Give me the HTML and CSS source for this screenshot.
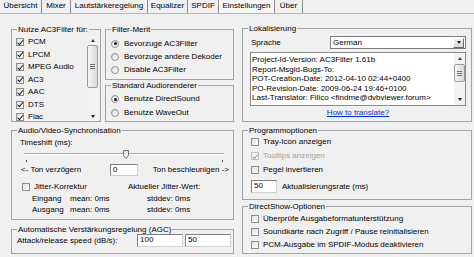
FILE: index.html
```html
<!DOCTYPE html>
<html lang="de">

<head>
    <meta charset="UTF-8">
    <meta name="viewport" content="width=device-width, initial-scale=1.0">
    <title>AC3Filter Einstellungen</title>
    <link rel="stylesheet" href="styles.css">
</head>

<body>
    <div class="tabs">
        <div class="tab tab-overview">Übersicht</div>
        <div class="tab tab-mixer">Mixer</div>
        <div class="tab tab-volume">Lautstärkeregelung</div>
        <div class="tab tab-eq">Equalizer</div>
        <div class="tab tab-spdif">SPDIF</div>
        <div class="tab tab-settings active">Einstellungen</div>
        <div class="tab tab-about">Über</div>
    </div>

    <div class="page">
        <div class="col col-left">
            <div class="top-row">
                <fieldset class="group g-formats">
                    <legend>Nutze AC3Filter für:</legend>
                    <div class="checklist">
                        <div class="items">
                            <div class="item"><span class="cb on"></span>PCM</div>
                            <div class="item"><span class="cb on"></span>LPCM</div>
                            <div class="item"><span class="cb on"></span>MPEG Audio</div>
                            <div class="item"><span class="cb on"></span>AC3</div>
                            <div class="item"><span class="cb on"></span>AAC</div>
                            <div class="item"><span class="cb on"></span>DTS</div>
                            <div class="item"><span class="cb on"></span>Flac</div>
                        </div>
                        <div class="vscroll list-scroll">
                            <div class="sb-btn"><span class="arr up"></span></div>
                            <div class="sb-track"><div class="thumb"><span class="grip"></span></div></div>
                            <div class="sb-btn"><span class="arr down"></span></div>
                        </div>
                    </div>
                </fieldset>

                <div class="stack">
                    <fieldset class="group g-merit">
                        <legend>Filter-Merit</legend>
                        <div class="body">
                            <div class="opt"><span class="rb on"></span>Bevorzuge AC3Filter</div>
                            <div class="opt"><span class="rb"></span>Bevorzuge andere Dekoder</div>
                            <div class="opt"><span class="rb"></span>Disable AC3Filter</div>
                        </div>
                    </fieldset>
                    <fieldset class="group g-renderer">
                        <legend>Standard Audiorenderer</legend>
                        <div class="body">
                            <div class="opt"><span class="rb on"></span>Benutze DirectSound</div>
                            <div class="opt"><span class="rb"></span>Benutze WaveOut</div>
                        </div>
                    </fieldset>
                </div>
            </div>

            <fieldset class="group g-sync">
                <legend>Audio/Video-Synchronisation</legend>
                <div class="body">
                    <div class="ts-label">Timeshift (ms):</div>
                    <div class="slider">
                        <div class="track"></div>
                        <div class="ticks"><span class="tick"></span><span class="tick"></span></div>
                        <svg class="slider-thumb" width="6" height="9" viewBox="0 0 6 9">
                            <path d="M0.5 0.5 H5.5 V5.5 L3 8.5 L0.5 5.5 Z" fill="#ececec" stroke="#707070" stroke-width="1"/>
                        </svg>
                    </div>
                    <div class="ton-row">
                        <span class="ton-left">&lt;- Ton verzögern</span>
                        <span class="field">0</span>
                        <span class="ton-right">Ton beschleunigen -&gt;</span>
                    </div>
                    <div class="jitter-row">
                        <div class="chk"><span class="cb"></span>Jitter-Korrektur</div>
                        <div>Aktueller Jitter-Wert:</div>
                    </div>
                    <div class="stat-row"><span>Eingang</span><span>mean: 0ms</span><span>stddev: 0ms</span></div>
                    <div class="stat-row"><span>Ausgang</span><span>mean: 0ms</span><span>stddev: 0ms</span></div>
                </div>
            </fieldset>

            <fieldset class="group g-agc">
                <legend>Automatische Verstärkungsregelung (AGC)</legend>
                <div class="body agc-row">
                    <span>Attack/release speed (dB/s):</span>
                    <span class="field">100</span>
                    <span class="field">50</span>
                </div>
            </fieldset>
        </div>

        <div class="col col-right">
            <fieldset class="group g-locale">
                <legend>Lokalisierung</legend>
                <div class="body">
                    <div class="lang-row">
                        <span class="lang-label">Sprache</span>
                        <div class="combo">
                            <span class="combo-text">German</span>
                            <span class="combo-btn"><span class="arr down"></span></span>
                        </div>
                    </div>
                    <div class="memo">
                        <div class="memo-text">
                            <div>Project-Id-Version: AC3Filter 1.61b</div>
                            <div>Report-Msgid-Bugs-To: </div>
                            <div>POT-Creation-Date: 2012-04-10 02:44+0400</div>
                            <div>PO-Revision-Date: 2009-06-24 19:46+0100</div>
                            <div>Last-Translator: Filico &lt;findme@dvbviewer.forum&gt;</div>
                        </div>
                        <div class="vscroll memo-scroll">
                            <div class="sb-btn"><span class="arr up"></span></div>
                            <div class="sb-track"><div class="thumb"><span class="grip"></span></div></div>
                            <div class="sb-btn"><span class="arr down"></span></div>
                        </div>
                    </div>
                    <div class="link-row"><a href="#">How to translate?</a></div>
                </div>
            </fieldset>

            <fieldset class="group g-program">
                <legend>Programmoptionen</legend>
                <div class="body">
                    <div class="chk-row"><span class="cb"></span>Tray-Icon anzeigen</div>
                    <div class="chk-row disabled"><span class="cb on"></span>Tooltips anzeigen</div>
                    <div class="chk-row"><span class="cb"></span>Pegel invertieren</div>
                    <div class="rate-row"><span class="field">50</span>Aktualisierungsrate (ms)</div>
                </div>
            </fieldset>

            <fieldset class="group g-dshow">
                <legend>DirectShow-Optionen</legend>
                <div class="body">
                    <div class="chk-row"><span class="cb"></span>Überprüfe Ausgabeformatunterstützung</div>
                    <div class="chk-row"><span class="cb"></span>Soundkarte nach Zugriff / Pause reinitialisieren</div>
                    <div class="chk-row"><span class="cb"></span>PCM-Ausgabe im SPDIF-Modus deaktivieren</div>
                </div>
            </fieldset>
        </div>
    </div>
</body>

</html>
```

FILE: styles.css
```css
* {
    box-sizing: border-box;
}

body {
    margin: 0;
    width: 474px;
    height: 257px;
    overflow: hidden;
    background-color: #f0f0f0;
    color: #000;
    font: 8px/10px "Liberation Sans", Arial, sans-serif;
}

/* tab strip */
.tabs {
    display: flex;
    height: 14px;
    border-bottom: 1px solid #b9b9b9;
}

.tab {
    height: 13px;
    line-height: 12px;
    text-align: center;
    white-space: nowrap;
    border-right: 1px solid #8c8c8c;
}

.tab-overview { width: 42px; }
.tab-mixer { width: 29px; }
.tab-volume { width: 77px; }
.tab-eq { width: 40px; }
.tab-spdif { width: 31px; }
.tab-settings { width: 56px; }
.tab-about { width: 28px; }

.tab.active {
    background-color: #f7f7f7;
}

/* page layout */
.page {
    display: flex;
    gap: 8px;
    padding: 11px 0 0 11px;
}

.col {
    display: flex;
    flex-direction: column;
}

.col-left {
    width: 223px;
}

.col-right {
    width: 230px;
    margin-top: -1px;
}

.top-row {
    display: flex;
    gap: 4px;
}

.stack {
    width: 129px;
    display: flex;
    flex-direction: column;
}

/* group boxes */
.group {
    margin: 0;
    padding: 0;
    min-width: 0;
    border: 1px solid #a3a3a3;
}

.group legend {
    margin-left: 5px;
    padding: 0 1px;
    font-size: 8px;
    line-height: 9px;
}

.g-formats { width: 90px; }
.g-renderer { margin-top: 1px; }
.g-sync { margin-top: 4px; }
.g-agc { margin-top: 5px; }
.g-program { margin-top: 4px; }
.g-dshow { margin-top: 2px; }

.g-merit .body { padding: 3px 0 3px 5px; }
.g-renderer .body { padding: 2px 0 1px 5px; }
.g-sync .body { padding: 3px 4px 4px 8px; }
.g-locale .body { padding: 3px 5px 3px 7px; }
.g-program .body { padding: 0 0 6px 8px; }
.g-dshow .body { padding: 1px 0 2px 8px; }

/* check boxes and radios */
.cb {
    position: relative;
    flex: none;
    width: 8px;
    height: 8px;
    border: 1px solid #8e8f8f;
    background: linear-gradient(135deg, #dedede, #ffffff);
}

.cb.on::after {
    content: "";
    position: absolute;
    left: 1.5px;
    top: -0.5px;
    width: 2px;
    height: 4.5px;
    border: solid #151515;
    border-width: 0 1.5px 1.5px 0;
    transform: rotate(40deg);
}

.rb {
    position: relative;
    flex: none;
    width: 8px;
    height: 8px;
    border-radius: 50%;
    border: 1px solid #8e8f8f;
    background: linear-gradient(135deg, #dcdcdc, #ffffff);
}

.rb.on::after {
    content: "";
    position: absolute;
    left: 1.5px;
    top: 1.5px;
    width: 3px;
    height: 3px;
    border-radius: 50%;
    background-color: #151515;
}

.opt {
    display: flex;
    align-items: center;
    gap: 5px;
    height: 13px;
    white-space: nowrap;
}

.g-renderer .opt {
    height: 14px;
}

/* format list */
.checklist {
    display: flex;
    height: 85px;
    margin-top: 2px;
    padding-left: 4px;
    overflow: hidden;
}

.items {
    flex: 1;
}

.item {
    display: flex;
    align-items: center;
    gap: 4px;
    height: 12.5px;
    white-space: nowrap;
}

/* scroll bars */
.vscroll {
    flex: none;
    width: 11px;
    display: flex;
    flex-direction: column;
    background-color: #f3f3f3;
}

.list-scroll {
    margin-right: 2px;
}

.sb-btn {
    height: 9px;
    display: flex;
    align-items: center;
    justify-content: center;
}

.memo-scroll .sb-btn {
    height: 11px;
}

.sb-track {
    flex: 1;
}

.thumb {
    height: 43px;
    border: 1px solid #9b9b9b;
    border-radius: 2px;
    background: linear-gradient(90deg, #f4f4f4, #dadada);
    display: flex;
    align-items: center;
    justify-content: center;
}

.memo-scroll .thumb {
    height: 18px;
}

.grip {
    width: 5px;
    height: 5px;
    background: repeating-linear-gradient(#6f6f6f 0 1px, transparent 1px 2px);
}

.arr {
    width: 0;
    height: 0;
    border-left: 2.5px solid transparent;
    border-right: 2.5px solid transparent;
}

.arr.up {
    border-bottom: 3px solid #3a3a3a;
}

.arr.down {
    border-top: 3px solid #1a1a1a;
}

/* edit fields */
.field {
    display: block;
    height: 12px;
    padding-left: 2px;
    line-height: 10px;
    background-color: #fff;
    border: 1px solid;
    border-color: #7f7f7f #cfcfcf #cfcfcf #7f7f7f;
}

/* a/v sync */
.ts-label {
    height: 10px;
}

.slider {
    position: relative;
    width: 200px;
    height: 14px;
    margin-left: 4px;
    padding-top: 5px;
}

.track {
    height: 2px;
    background-color: #a6a6a6;
    border-bottom: 1px solid #fff;
}

.ticks {
    display: flex;
    justify-content: space-between;
    margin-top: 5px;
    padding: 0 1px 0 2px;
}

.tick {
    width: 1px;
    height: 2px;
    background-color: #555;
}

.slider-thumb {
    position: absolute;
    left: 99px;
    top: 2px;
}

.ton-row {
    display: grid;
    grid-template-columns: 90px 28px 1fr;
    align-items: center;
    height: 12px;
    margin-top: 2px;
    white-space: nowrap;
}

.ton-left {
    padding-left: 1px;
}

.ton-right {
    text-align: right;
}

.jitter-row {
    display: grid;
    grid-template-columns: 108px 1fr;
    align-items: center;
    height: 12px;
    margin-top: 5px;
    white-space: nowrap;
}

.chk {
    display: flex;
    align-items: center;
    gap: 4px;
    padding-left: 2px;
}

.stat-row {
    display: grid;
    grid-template-columns: 38px 77px 1fr;
    height: 11px;
    line-height: 11px;
    padding-left: 12px;
    white-space: nowrap;
}

/* agc */
.agc-row {
    display: grid;
    grid-template-columns: 118px 46px 46px;
    column-gap: 2px;
    align-items: center;
    height: 13px;
    padding-left: 5px;
    margin-bottom: 6px;
    white-space: nowrap;
}

.agc-row .field {
    height: 13px;
}

/* localisation */
.lang-row {
    display: grid;
    grid-template-columns: 80px 1fr;
    align-items: center;
    height: 13px;
}

.lang-label {
    padding-left: 1px;
}

.combo {
    display: flex;
    align-items: center;
    height: 13px;
    padding-left: 2px;
    background-color: #fff;
    border: 1px solid #7a7a7a;
}

.combo-text {
    flex: 1;
}

.combo-btn {
    width: 11px;
    height: 10px;
    margin-right: 1px;
    display: flex;
    align-items: center;
    justify-content: center;
    background: linear-gradient(#f2f2f2, #d9d9d9);
    border: 1px solid;
    border-color: #fff #6a6a6a #6a6a6a #fff;
}

.memo {
    display: flex;
    height: 54px;
    margin-top: 3px;
    background-color: #fff;
    border: 1px solid #8a8a8a;
}

.memo-text {
    flex: 1;
    padding: 2px 0 0 1px;
    line-height: 9.5px;
    white-space: nowrap;
    overflow: hidden;
}

.link-row {
    height: 10px;
    margin-top: 2px;
    text-align: center;
}

.link-row a {
    color: #0033cc;
    text-decoration: underline;
}

/* program + directshow options */
.chk-row {
    display: flex;
    align-items: center;
    gap: 4px;
    height: 14px;
    white-space: nowrap;
}

.g-dshow .chk-row {
    height: 13px;
}

.chk-row.disabled {
    color: #a0a0a0;
}

.chk-row.disabled .cb {
    border-color: #c4c4c4;
    background: #f4f4f4;
}

.chk-row.disabled .cb.on::after {
    border-color: #a0a0a0;
}

.rate-row {
    display: flex;
    align-items: center;
    gap: 5px;
    height: 13px;
    margin-top: 3px;
}

.rate-row .field {
    width: 26px;
    height: 13px;
}
```
